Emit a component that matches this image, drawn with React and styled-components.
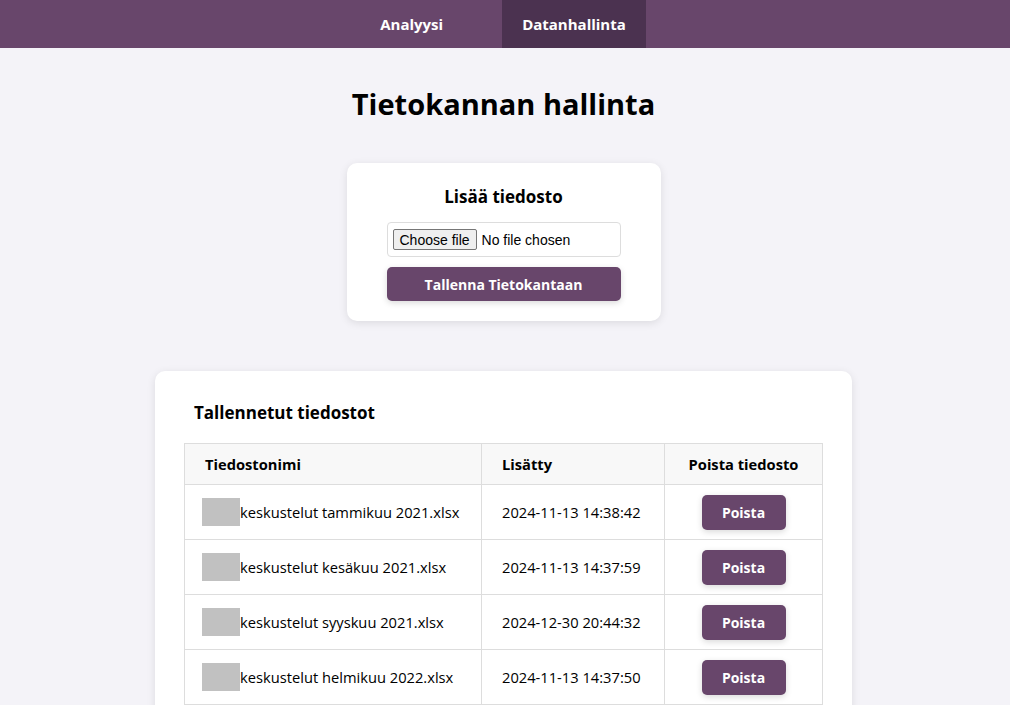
import React from "react";
import styled, { createGlobalStyle } from "styled-components";

const GlobalStyle = createGlobalStyle`
  body {
    margin: 0;
    background: #f4f3f8;
    font-family: "Open Sans", "Noto Sans", sans-serif;
    color: #000;
  }
`;

const Nav = styled.nav`
  height: 48px;
  background: #68466b;
  display: flex;
  justify-content: center;
  gap: 39px;
  padding-right: 4px;
`;

const NavItem = styled.a`
  display: flex;
  align-items: center;
  padding: 0 20px;
  color: #fff;
  font-weight: 700;
  font-size: 15px;
  text-decoration: none;
  background: ${(p) => (p.active ? "#4b3250" : "transparent")};
`;

const Main = styled.main`
  display: flex;
  flex-direction: column;
  align-items: center;
  padding-right: 3px;
`;

const Title = styled.h1`
  margin: 36px 0 40px;
  font-size: 29px;
  font-weight: 700;
`;

const Card = styled.section`
  background: #fff;
  border-radius: 10px;
  box-shadow: 0 2px 8px rgba(0, 0, 0, 0.1);
  width: ${(p) => p.width}px;
  box-sizing: border-box;
  padding: ${(p) => p.pad};
  margin-top: ${(p) => p.mt || 0}px;
`;

const UploadCard = styled(Card)`
  display: flex;
  flex-direction: column;
  align-items: center;
`;

const CardTitle = styled.h2`
  margin: 0;
  font-size: 17px;
  font-weight: 700;
`;

const FileBox = styled.label`
  margin-top: 14px;
  width: 234px;
  height: 35px;
  box-sizing: border-box;
  border: 1px solid #ddd;
  border-radius: 4px;
  display: flex;
  align-items: center;
  gap: 5px;
  padding: 0 5px;
  font-family: "Liberation Sans", Arial, sans-serif;
  font-size: 14px;
  input {
    display: none;
  }
`;

const PickButton = styled.span`
  height: 21px;
  box-sizing: border-box;
  padding: 0 6px;
  display: flex;
  align-items: center;
  background: #efefef;
  border: 1px solid #767676;
  border-radius: 2px;
`;

const SaveButton = styled.button`
  margin-top: 10px;
  width: 234px;
  height: 34px;
  border: none;
  border-radius: 5px;
  background: #68466b;
  color: #fff;
  font-family: inherit;
  font-weight: 700;
  font-size: 14px;
  box-shadow: 0 2px 6px rgba(0, 0, 0, 0.15);
`;

const ListTitle = styled.h2`
  margin: 0 0 19px 10px;
  font-size: 17px;
  font-weight: 700;
`;

const Table = styled.table`
  width: 100%;
  border-collapse: collapse;
  table-layout: fixed;
  font-size: 14.7px;
`;

const Th = styled.th`
  height: 40px;
  background: #f8f8f8;
  border: 1px solid #ddd;
  font-weight: 700;
  text-align: ${(p) => p.align || "left"};
  padding: 0 20px;
  width: ${(p) => (p.w ? `${p.w}px` : "auto")};
`;

const Td = styled.td`
  height: 54px;
  border: 1px solid #ddd;
  padding: 0 20px 0 ${(p) => p.pl || 20}px;
  text-align: ${(p) => p.align || "left"};
  white-space: nowrap;
`;

const NameWrap = styled.div`
  display: flex;
  align-items: center;
`;

const Thumb = styled.span`
  width: 38px;
  height: 28px;
  background: #c1c1c1;
  display: inline-block;
`;

const DeleteButton = styled.button`
  width: 84px;
  height: 35px;
  border: none;
  border-radius: 5px;
  background: #68466b;
  color: #fff;
  font-family: inherit;
  font-weight: 700;
  font-size: 14px;
  box-shadow: 0 2px 6px rgba(0, 0, 0, 0.15);
`;

const files = [
  { name: "keskustelut tammikuu 2021.xlsx", added: "2024-11-13 14:38:42" },
  { name: "keskustelut kesäkuu 2021.xlsx", added: "2024-11-13 14:37:59" },
  { name: "keskustelut syyskuu 2021.xlsx", added: "2024-12-30 20:44:32" },
  { name: "keskustelut helmikuu 2022.xlsx", added: "2024-11-13 14:37:50" },
];

export default function App() {
  return (
    <>
      <GlobalStyle />
      <Nav>
        <NavItem href="#">Analyysi</NavItem>
        <NavItem href="#" active>
          Datanhallinta
        </NavItem>
      </Nav>
      <Main>
        <Title>Tietokannan hallinta</Title>
        <UploadCard width={314} pad="22px 0 20px">
          <CardTitle>Lisää tiedosto</CardTitle>
          <FileBox>
            <input type="file" />
            <PickButton>Choose file</PickButton>
            <span>No file chosen</span>
          </FileBox>
          <SaveButton>Tallenna Tietokantaan</SaveButton>
        </UploadCard>
        <Card width={697} pad="30px 29px" mt={50}>
          <ListTitle>Tallennetut tiedostot</ListTitle>
          <Table>
            <thead>
              <tr>
                <Th w={256}>Tiedostonimi</Th>
                <Th w={142}>Lisätty</Th>
                <Th align="center">Poista tiedosto</Th>
              </tr>
            </thead>
            <tbody>
              {files.map((f) => (
                <tr key={f.name}>
                  <Td pl={17}>
                    <NameWrap>
                      <Thumb />
                      {f.name}
                    </NameWrap>
                  </Td>
                  <Td>{f.added}</Td>
                  <Td align="center">
                    <DeleteButton>Poista</DeleteButton>
                  </Td>
                </tr>
              ))}
            </tbody>
          </Table>
        </Card>
      </Main>
    </>
  );
}
